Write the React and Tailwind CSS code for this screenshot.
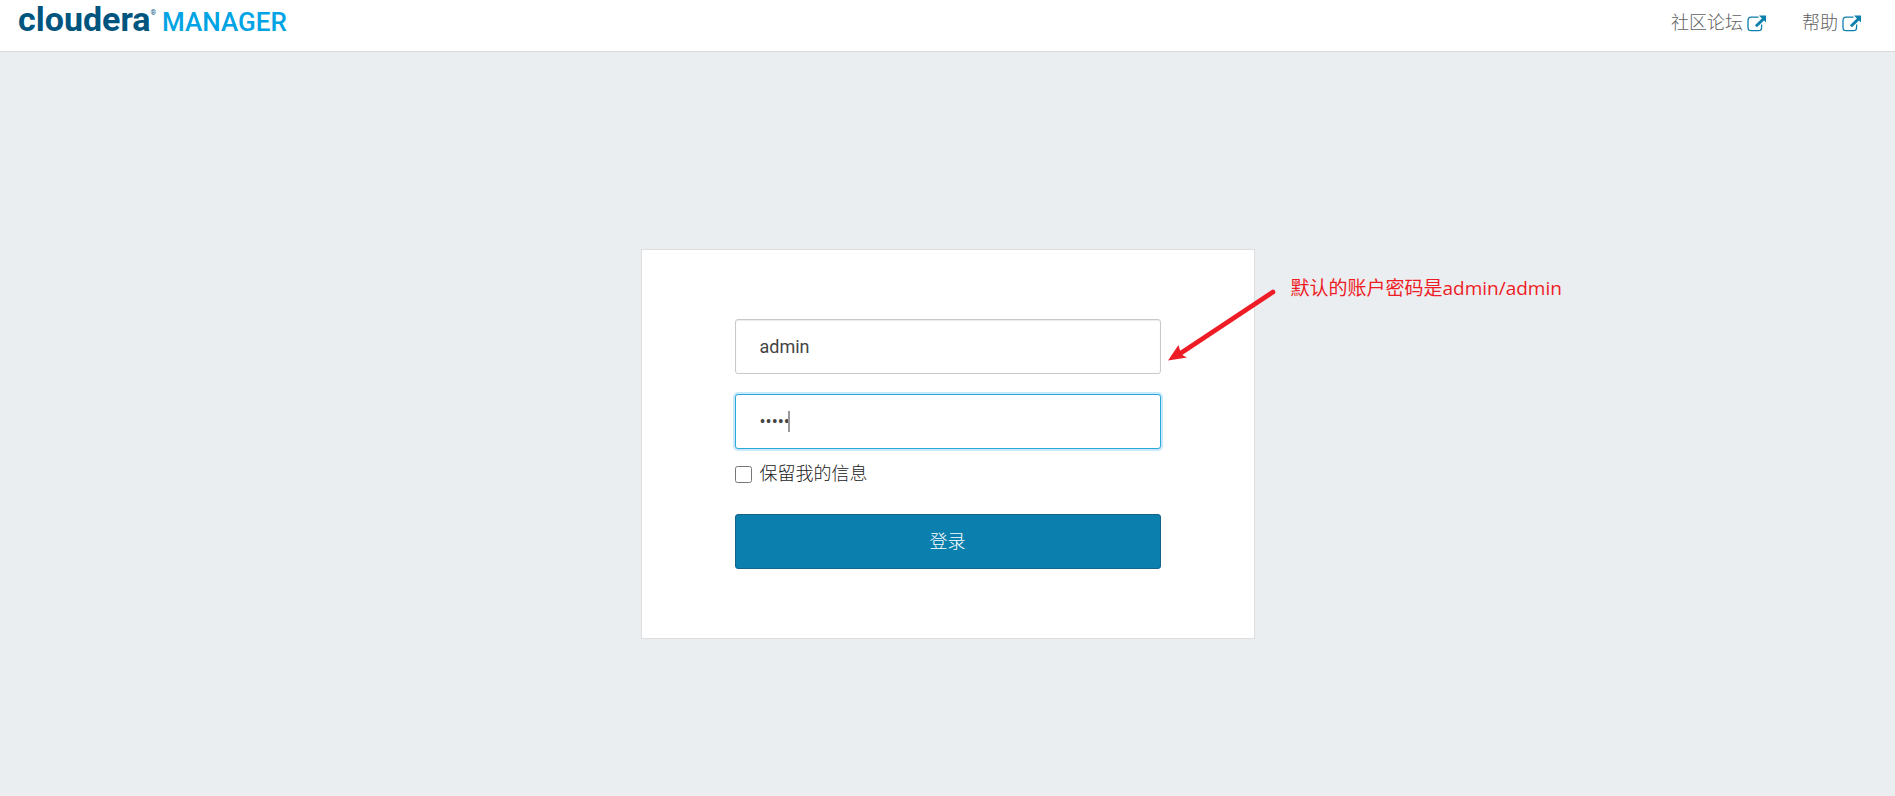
import { useId } from "react";

function ExternalIcon() {
  return (
    <svg viewBox="0 0 19 17" className="h-[17px] w-[19px]" aria-hidden="true">
      <path
        d="M11.500 2.200H4.200Q1 2.200 1 5.400v7Q1 15.600 4.200 15.600h7.200q3.200 0 3.200-3.200V9.500"
        fill="none"
        stroke="#0b7fad"
        strokeWidth="1.3"
      />
      <path d="M12 .6h7v6.900l-2-2-7.100 6.700-2-2 7-6.700z" fill="#0b7fad" />
    </svg>
  );
}

function NavLink({ children }) {
  return (
    <a href="#" className="flex items-center gap-1 text-[18px] leading-6 font-light text-[#606060]">
      {children}
      <ExternalIcon />
    </a>
  );
}

const field =
  "h-[55px] w-full rounded-[3px] border bg-white px-6 text-[18px] text-[#444] outline-none";

export default function App() {
  const id = useId();
  return (
    <div className="flex min-h-screen flex-col bg-[#ebeef1] font-['Roboto','Noto_Sans_CJK_SC',sans-serif]">
      <header className="flex h-[52px] items-start justify-between border-b border-[#d8dadc] bg-white pr-[34px] pl-[18px]">
        <a href="#" className="flex items-baseline leading-[38px]">
          <span className="text-[34px] font-bold text-[#00557f]">cloudera</span>
          <span className="self-start pt-[3px] text-[7px] leading-5 text-[#00557f]">®</span>
          <span className="pl-[6px] text-[26px] font-medium text-[#00a4e4]">MANAGER</span>
        </a>
        <nav className="flex gap-9 pt-[11px]">
          <NavLink>社区论坛</NavLink>
          <NavLink>帮助</NavLink>
        </nav>
      </header>

      <main className="flex flex-1 flex-col items-center pt-[197px]">
        <div className="relative w-[614px]">
          <form
            className="flex flex-col border border-[#dcdee0] bg-white px-[93px] py-[69px]"
            onSubmit={(e) => e.preventDefault()}
          >
            <input
              type="text"
              aria-label="用户名"
              defaultValue="admin"
              className={`${field} border-[#c8c8c8] shadow-[inset_0_1px_1px_rgba(0,0,0,0.08)]`}
            />
            <div className="relative mt-5">
              <input
                type="password"
                aria-label="密码"
                defaultValue="admin"
                className={`${field} block border-[#29a7de] shadow-[0_0_0_2px_#c8e9f7]`}
              />
              <span className="absolute top-[17px] left-[53px] h-[21px] w-[2px] bg-[#999]" />
            </div>
            <label htmlFor={id} className="mt-[13px] flex items-center gap-2 text-[18px] leading-6 font-light text-[#222]">
              <input id={id} type="checkbox" className="size-[17px]" />
              保留我的信息
            </label>
            <button
              type="submit"
              className="mt-7 h-[55px] rounded-[3px] border border-[#146489] bg-[#0b7fad] text-[18px] font-light text-white"
            >
              登录
            </button>
          </form>

          <svg
            viewBox="0 0 110 76"
            className="absolute top-[38px] left-[526px] h-[76px] w-[110px]"
            aria-hidden="true"
          >
            <path d="M106 5 14 66" stroke="#ee1c25" strokeWidth="4.6" strokeLinecap="round" />
            <path d="M1 73.500 11.500 58 13.500 65 16 68.500 20 70.500z" fill="#ee1c25" />
          </svg>
          <p className="absolute top-[27px] left-[650px] text-[19px] leading-6 whitespace-nowrap text-[#ee1c25] font-['Open_Sans','Noto_Sans_CJK_SC',sans-serif]">
            默认的账户密码是admin/admin
          </p>
        </div>
      </main>
    </div>
  );
}
